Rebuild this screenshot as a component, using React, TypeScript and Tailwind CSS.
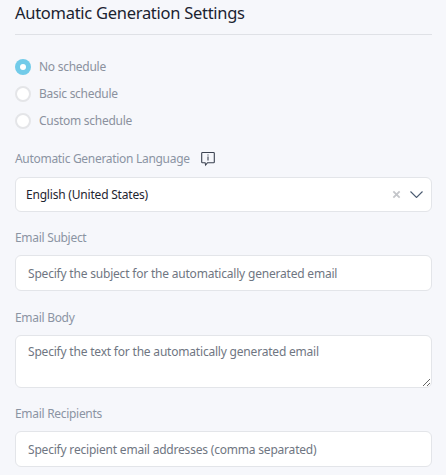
const radios = [
  { label: "No schedule", checked: true },
  { label: "Basic schedule", checked: false },
  { label: "Custom schedule", checked: false },
];

const fieldClass =
  "block w-full h-[36px] rounded-[6px] border border-[#e3e5e9] bg-white px-3 text-[12px] tracking-[-0.2px] text-[#1f2530] placeholder:text-[#6f7682] outline-none";

const labelClass = "h-[20px] text-[12px] leading-[22px] tracking-[-0.3px] text-[#8b94a3]";

const App = () => {
  return (
    <div
      className="h-[475px] w-[446px] overflow-hidden bg-[#f6f7fb] pl-[15px] pr-[14px]"
      style={{ fontFamily: '"Noto Sans", "Lato", sans-serif' }}
    >
      <h2 className="h-[35px] border-b border-[#dfe1e6] pt-[1px] text-[16.5px] leading-[24px] tracking-[-0.28px] text-[#1b2330]">
        Automatic Generation Settings
      </h2>

      <div className="mt-[24px] flex flex-col gap-[11px]">
        {radios.map((radio) => (
          <label key={radio.label} className="flex h-4 items-center gap-[8px] text-[12px] tracking-[-0.27px] text-[#8b919e]">
            {radio.checked ? (
              <span className="flex h-4 w-4 items-center justify-center rounded-full bg-[#72cbe9]">
                <span className="h-[6px] w-[6px] rounded-full bg-white" />
              </span>
            ) : (
              <span className="h-4 w-4 rounded-full border-2 border-[#e4e5e8] bg-white" />
            )}
            {radio.label}
          </label>
        ))}
      </div>

      <div className="mt-[20px] flex h-[20px] items-center gap-[10px] text-[12px] tracking-[-0.3px] text-[#8b94a3]">
        Automatic Generation Language
        <svg width="16" height="16" viewBox="0 0 16 16" fill="none" stroke="#3b4250" strokeWidth="1.1">
          <path d="M2.500 1.500h11a.8.8 0 0 1 .8.8v8.600a.8.8 0 0 1-.8.8H7.500L5.600 14l-.5-2.300H2.500a.8.8 0 0 1-.8-.8V2.300a.8.8 0 0 1 .8-.8z" />
          <path d="M8 5.500v4M8 3.400v1" />
        </svg>
      </div>

      <div className="mt-[8px] flex h-[35px] items-center rounded-[6px] border border-[#e3e5e9] bg-white pl-[10px] pr-[8px] text-[12px] tracking-[-0.2px] text-[#1f2530]">
        <span className="flex-1">English (United States)</span>
        <svg width="9" height="9" viewBox="0 0 10 10" stroke="#c4c6ca" strokeWidth="2" className="mr-[9px]">
          <path d="M1.500 1.500l7 7M8.500 1.500l-7 7" />
        </svg>
        <svg width="13" height="7" viewBox="0 0 13 7" fill="none" stroke="#4a5a70" strokeWidth="1.1">
          <path d="M.5.500l6 6 6-6" />
        </svg>
      </div>

      <div className={`mt-[15px] ${labelClass}`}>Email Subject</div>
      <input className={`${fieldClass} mt-[8px]`} placeholder="Specify the subject for the automatically generated email" />

      <div className={`mt-[16px] ${labelClass}`}>Email Body</div>
      <textarea
        className="mt-[8px] block h-[53px] w-full rounded-[6px] border border-[#e3e5e9] bg-white px-3 py-[6px] text-[12px] leading-[20px] tracking-[-0.2px] text-[#1f2530] outline-none placeholder:text-[#6f7682]"
        placeholder="Specify the text for the automatically generated email"
      />

      <div className={`mt-[15px] ${labelClass}`}>Email Recipients</div>
      <input className={`${fieldClass} mt-[8px]`} placeholder="Specify recipient email addresses (comma separated)" />
    </div>
  );
};

export default App;
